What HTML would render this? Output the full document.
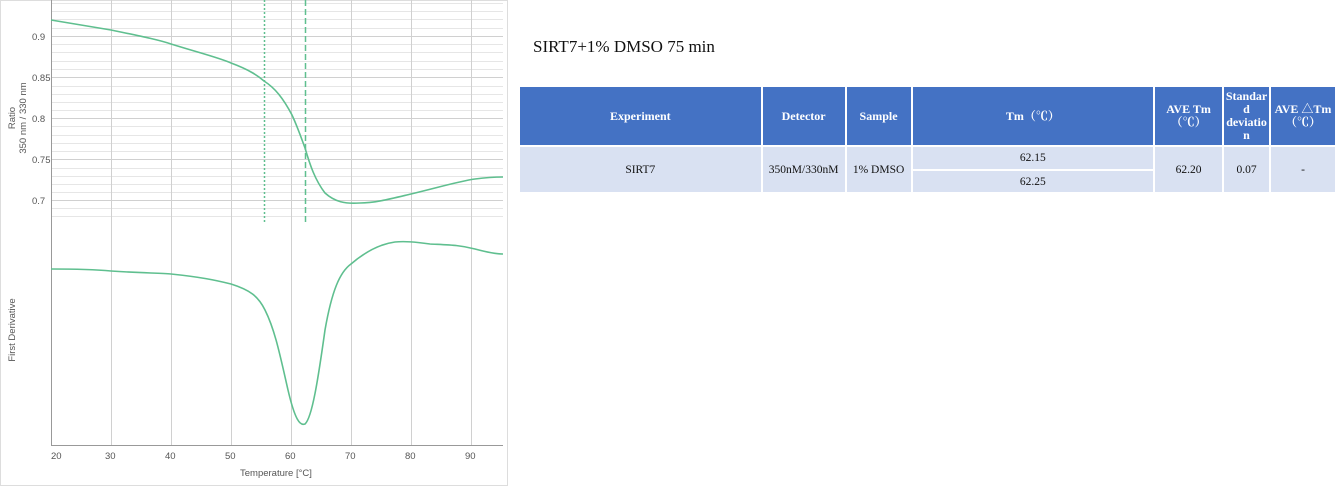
<!DOCTYPE html>
<html><head><meta charset="utf-8"><style>
body{margin:0;width:1337px;height:487px;background:#fff;position:relative;overflow:hidden;font-family:"Liberation Serif","Noto Serif CJK SC",serif}
.t{position:absolute;left:533px;top:37px;font-size:17px;color:#111}
table{position:absolute;left:518px;top:85px;border-collapse:collapse;font-size:11.5px;text-align:center}
td{border:2px solid #fff;padding:0}
th{border:2px solid #fff;background:#4472c4;color:#fff;font-weight:bold;font-size:12px;line-height:13px;padding:0}
td{background:#d9e1f2;color:#111}
</style></head><body>
<svg width="510" height="487" style="position:absolute;left:0;top:0" font-family="Liberation Sans, sans-serif">
<rect x="0.5" y="0.5" width="507" height="485" fill="#fff" stroke="#ddd"/>
<g stroke="#e6e6e6" stroke-width="1">
<line x1="51" x2="503" y1="3.5" y2="3.5"/><line x1="51" x2="503" y1="11.5" y2="11.5"/><line x1="51" x2="503" y1="19.5" y2="19.5"/><line x1="51" x2="503" y1="28.5" y2="28.5"/>
<line x1="51" x2="503" y1="44.5" y2="44.5"/><line x1="51" x2="503" y1="52.5" y2="52.5"/><line x1="51" x2="503" y1="61.5" y2="61.5"/><line x1="51" x2="503" y1="69.5" y2="69.5"/>
<line x1="51" x2="503" y1="86.5" y2="86.5"/><line x1="51" x2="503" y1="94.5" y2="94.5"/><line x1="51" x2="503" y1="102.5" y2="102.5"/><line x1="51" x2="503" y1="110.5" y2="110.5"/>
<line x1="51" x2="503" y1="126.5" y2="126.5"/><line x1="51" x2="503" y1="135.5" y2="135.5"/><line x1="51" x2="503" y1="143.5" y2="143.5"/><line x1="51" x2="503" y1="151.5" y2="151.5"/>
<line x1="51" x2="503" y1="168.5" y2="168.5"/><line x1="51" x2="503" y1="176.5" y2="176.5"/><line x1="51" x2="503" y1="184.5" y2="184.5"/><line x1="51" x2="503" y1="192.5" y2="192.5"/>
<line x1="51" x2="503" y1="208.5" y2="208.5"/><line x1="51" x2="503" y1="216.5" y2="216.5"/>
</g>
<g stroke="#d0d0d0" stroke-width="1">
<line x1="51" x2="503" y1="36.5" y2="36.5"/><line x1="51" x2="503" y1="77.5" y2="77.5"/><line x1="51" x2="503" y1="118.5" y2="118.5"/><line x1="51" x2="503" y1="159.5" y2="159.5"/><line x1="51" x2="503" y1="200.5" y2="200.5"/>
<line x1="111.5" x2="111.5" y1="0" y2="445"/><line x1="171.5" x2="171.5" y1="0" y2="445"/><line x1="231.5" x2="231.5" y1="0" y2="445"/><line x1="291.5" x2="291.5" y1="0" y2="445"/><line x1="351.5" x2="351.5" y1="0" y2="445"/><line x1="411.5" x2="411.5" y1="0" y2="445"/><line x1="471.5" x2="471.5" y1="0" y2="445"/>
</g>
<line x1="51.5" x2="51.5" y1="0" y2="446" stroke="#999"/>
<line x1="51" x2="503" y1="445.5" y2="445.5" stroke="#999"/>
<g fill="#555" font-size="9.5">
<text x="32" y="40">0.9</text><text x="32" y="81">0.85</text><text x="32" y="122">0.8</text><text x="32" y="163">0.75</text><text x="32" y="204">0.7</text>
<text x="51" y="459">20</text><text x="105" y="459">30</text><text x="165" y="459">40</text><text x="225" y="459">50</text><text x="285" y="459">60</text><text x="345" y="459">70</text><text x="405" y="459">80</text><text x="465" y="459">90</text>
<text x="240" y="476">Temperature [°C]</text>
<text transform="translate(15,118) rotate(-90)" text-anchor="middle">Ratio</text>
<text transform="translate(26,118) rotate(-90)" text-anchor="middle">350 nm / 330 nm</text>
<text transform="translate(15,330) rotate(-90)" text-anchor="middle">First Derivative</text>
</g>
<line x1="264.5" x2="264.5" y1="0" y2="222" stroke="#5fbf8f" stroke-width="1.5" stroke-dasharray="2,2"/>
<line x1="305.5" x2="305.5" y1="0" y2="222" stroke="#5fbf8f" stroke-width="1.5" stroke-dasharray="6,3"/>
<g fill="none" stroke="#5fbf8f" stroke-width="1.6">
<path d="M51,20 C80,25 100,28 111,30 C140,36 160,40 171,44 C200,53 220,58 231,63 C250,70 258,76 264,81 C275,88 283,98 292,115 C298,128 302,140 305,148 C310,165 315,180 325,193 C335,202 345,204 360,203 C375,203 390,199 411,194 C440,187 460,181 475,179 C490,177 497,177 503,177"/>
<path d="M51,269 C80,269 100,270 111,271 C140,273 160,273 171,274 C200,277 215,280 231,284 C250,290 258,296 265,310 C275,330 280,355 288,390 C295,420 300,426 305,424 C312,418 318,380 325,330 C332,290 340,272 351,264 C365,252 380,244 395,242 C405,241 415,242 430,244 C450,245 460,245 475,249 C490,253 497,254 503,254"/>
</g>
</svg>
<div class="t">SIRT7+1% DMSO 75 min</div>
<table>
<tr style="height:60px"><th style="width:241px">Experiment</th><th style="width:82px">Detector</th><th style="width:64px">Sample</th><th style="width:241px">Tm（℃）</th><th style="width:67px">AVE Tm（℃）</th><th style="width:45px">Standar d deviatio n</th><th style="width:64px">AVE △Tm（℃）</th></tr>
<tr style="height:24px"><td rowspan="2">SIRT7</td><td rowspan="2">350nM/330nM</td><td rowspan="2">1% DMSO</td><td>62.15</td><td rowspan="2">62.20</td><td rowspan="2">0.07</td><td rowspan="2">-</td></tr>
<tr style="height:23px"><td>62.25</td></tr>
</table>
</body></html>
